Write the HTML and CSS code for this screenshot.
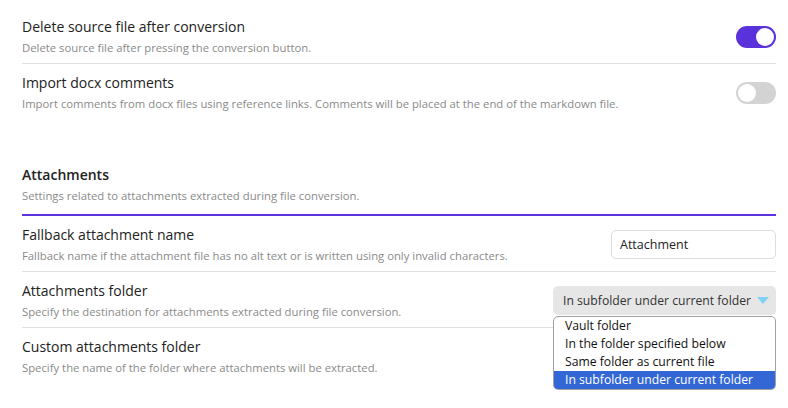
FILE: index.html
```html
<!DOCTYPE html>
<html>
<head>
<meta charset="utf-8">
<link rel="stylesheet" href="styles.css">
</head>
<body>
<div class="page">
  <div class="item first">
    <div class="info">
      <div class="name">Delete source file after conversion</div>
      <div class="desc">Delete source file after pressing the conversion button.</div>
    </div>
    <div class="control"><div class="toggle on"><span class="knob"></span></div></div>
  </div>
  <div class="item">
    <div class="info">
      <div class="name">Import docx comments</div>
      <div class="desc">Import comments from docx files using reference links. Comments will be placed at the end of the markdown file.</div>
    </div>
    <div class="control"><div class="toggle"><span class="knob"></span></div></div>
  </div>

  <div class="item heading">
    <div class="info">
      <div class="name">Attachments</div>
      <div class="desc">Settings related to attachments extracted during file conversion.</div>
    </div>
  </div>
  <div class="item after-heading">
    <div class="info">
      <div class="name">Fallback attachment name</div>
      <div class="desc">Fallback name if the attachment file has no alt text or is written using only invalid characters.</div>
    </div>
    <div class="control"><div class="input">Attachment</div></div>
  </div>
  <div class="item">
    <div class="info">
      <div class="name">Attachments folder</div>
      <div class="desc">Specify the destination for attachments extracted during file conversion.</div>
    </div>
    <div class="control">
      <div class="select-wrap">
        <div class="select">In subfolder under current folder<span class="arrow"></span></div>
        <ul class="options">
          <li>Vault folder</li>
          <li>In the folder specified below</li>
          <li>Same folder as current file</li>
          <li class="selected">In subfolder under current folder</li>
        </ul>
      </div>
    </div>
  </div>
  <div class="item">
    <div class="info">
      <div class="name">Custom attachments folder</div>
      <div class="desc">Specify the name of the folder where attachments will be extracted.</div>
    </div>
  </div>
</div>
</body>
</html>
```
FILE: styles.css
```css
html, body {
  margin: 0;
  padding: 0;
  background: #ffffff;
}
body {
  font-family: "Open Sans", "Noto Sans", sans-serif;
  color: #222222;
}
.page {
  padding: 7px 12px 30px 22px;
}
.item {
  display: flex;
  align-items: center;
  border-top: 1px solid #e0e0e0;
  padding: 8px 0 6px 0;
  min-height: 40px;
}
.item.first {
  border-top: 1px solid transparent;
}
.info {
  flex: 1;
  min-width: 0;
}
.name {
  font-size: 14px;
  line-height: 22px;
  color: #222222;
}
.desc {
  font-size: 11.3px;
  line-height: 18px;
  color: #8a8a8a;
  margin-top: 1px;
}
.control {
  flex: none;
  display: flex;
  justify-content: flex-end;
}
.heading {
  border-top: none;
  margin-top: 37px;
  border-bottom: 2px solid #5b33de;
  padding-bottom: 9px;
}
.heading .name {
  font-weight: 600;
}
.after-heading {
  border-top: none;
}
.toggle {
  width: 40px;
  height: 22px;
  border-radius: 11px;
  background: #d3d3d3;
  display: flex;
  align-items: center;
  padding: 0 2px;
  box-sizing: border-box;
}
.toggle.on {
  background: #5a32dc;
  justify-content: flex-end;
}
.knob {
  width: 18px;
  height: 18px;
  border-radius: 50%;
  background: #ffffff;
}
.input {
  width: 165px;
  height: 29px;
  box-sizing: border-box;
  border: 1px solid #dddddd;
  border-radius: 5px;
  font-size: 12.5px;
  line-height: 27px;
  padding: 0 8px;
  color: #222222;
}
.select-wrap {
  position: relative;
}
.select {
  width: 223px;
  height: 29px;
  box-sizing: border-box;
  background: #e6e6e6;
  border-radius: 5px;
  font-size: 12.2px;
  line-height: 29px;
  padding: 0 0 0 10px;
  color: #333333;
  display: flex;
  align-items: center;
  gap: 6px;
}
.arrow {
  width: 0;
  height: 0;
  border-left: 6px solid transparent;
  border-right: 6px solid transparent;
  border-top: 7px solid #80d2f5;
}
.options {
  position: absolute;
  top: 30px;
  left: 0;
  width: 223px;
  box-sizing: border-box;
  margin: 0;
  padding: 0;
  list-style: none;
  background: #ffffff;
  border: 1px solid #a0a0a0;
  border-radius: 5px;
  overflow: hidden;
}
.options li {
  display: block;
  height: 18px;
  font-size: 12.2px;
  line-height: 18px;
  padding: 0 11px;
  color: #111111;
}
.options li.selected {
  background: #3367d6;
  color: #ffffff;
}
```
